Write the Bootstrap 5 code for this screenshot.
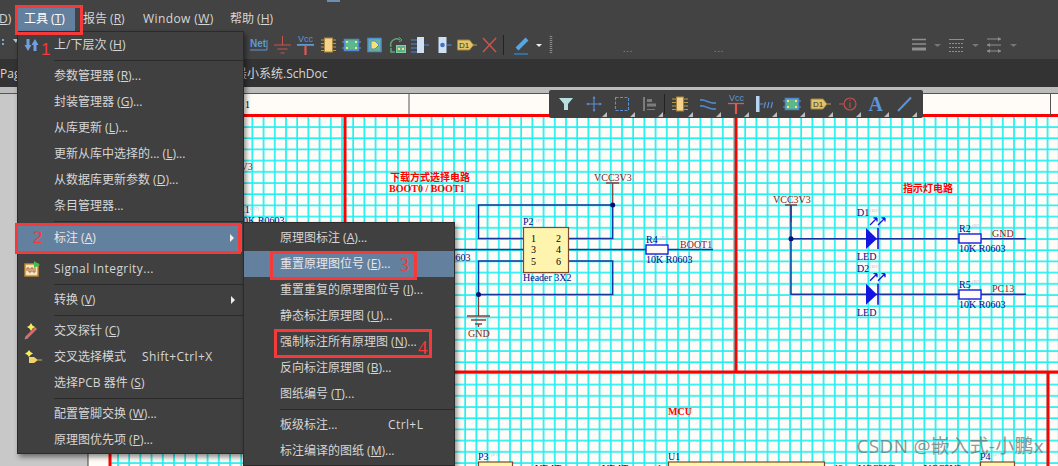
<!DOCTYPE html>
<html lang="zh">

<head>
  <meta charset="UTF-8">
  <title>原理图编辑器</title>
  <link href="https://cdn.jsdelivr.net/npm/bootstrap@5.3.2/dist/css/bootstrap.min.css" rel="stylesheet">
  <style>
    html, body { height: 100%; }

    body {
      background: #c8c8c8;
      color: #d6d6d6;
      font: 12px/1.2 "Open Sans", "Noto Sans CJK SC", sans-serif;
    }

    /* top bars */
    .bar-menu { height: 31px; background: #434343; padding-top: 8px; }
    .bar-tools { height: 28px; background: #434343; }
    .bar-tabs { height: 28px; background: #333; padding-top: 2px; }
    .bar-edge { height: 7px; background: #bcbcbc; border-bottom: 1px solid #555; }

    .top-link { height: 23px; display: flex; align-items: center; color: #d6d6d6; text-decoration: none; }
    .top-clip { width: 18px; margin-left: -1px; }
    .top-active { width: 58px; padding-left: 7px; background: #64809f; color: #fff; margin-right: 8px; }
    .top-report { width: 60px; }
    .top-window { width: 87px; letter-spacing: .4px; }
    .wide-latin { letter-spacing: .4px; }

    .tool-left { width: 248px; }
    .tool-btn { width: 23px; height: 28px; display: flex; align-items: center; justify-content: center; }
    .tool-sep { width: 1px; height: 20px; background: #222; margin: 0 6px 0 2px; }
    .tool-gap1 { width: 70px; }
    .tool-gap2 { width: 81px; }
    .tool-gap3 { width: 186px; }
    .tool-dots { color: #999; letter-spacing: 1px; font-size: 9px; line-height: 1; margin-top: 6px; }
    .tool-right { width: 24px; }
    .tool-caret { width: 14px; }
    .tab-first { width: 235px; overflow: hidden; }

    /* schematic */
    .sheet-area { min-height: 0; }
    .sheet-area svg { display: block; }
    .sch { font-family: "Liberation Serif", serif; font-size: 10px; }
    .sch-blue { fill: #000a8c; }
    .sch-red { fill: #8a1c1c; }
    .sch-mark { fill: #f00; font-weight: 700; }
    .sch-cjk { font-family: "Noto Sans CJK SC", sans-serif; }
    .sch-tiny { font-size: 5px; fill: #bdbdd6; }
    .wire { fill: none; stroke: #16359f; stroke-width: 1.5; }
    .wire-red { fill: none; stroke: #8a4040; stroke-width: 1.3; }
    .frame { fill: none; stroke: #f00; stroke-width: 3; }
    .part { fill: #fff4ad; stroke: #7a4a2a; stroke-width: 1.2; }
    .res { fill: #fffcf7; stroke: #1a1ae0; stroke-width: 1.4; }

    /* floating toolbar */
    .float-bar {
      top: -4px;
      left: 549px;
      width: 374px;
      height: 28px;
      padding-left: 3px;
      background: #404040;
      border-radius: 2px;
    }
    .float-btn { width: 28px; height: 28px; position: relative; display: flex; align-items: center; justify-content: center; }
    .float-btn::after {
      content: "";
      position: absolute;
      right: 1px;
      bottom: 1px;
      border-left: 5px solid transparent;
      border-bottom: 5px solid #bdbdbd;
    }
    .float-sep { width: 1px; height: 20px; background: #222; margin-top: 4px; margin-right: 1px; }
    .float-plain::after { display: none; }

    /* menus */
    .dropdown-menu.tool-menu {
      --bs-dropdown-bg: #404040;
      --bs-dropdown-border-color: #2b2b2b;
      --bs-dropdown-border-radius: 0;
      --bs-dropdown-padding-y: 0;
      --bs-dropdown-divider-bg: #2a2a2a;
      font-size: 12px;
      min-width: 0;
      box-shadow: 2px 3px 5px rgba(0, 0, 0, .45);
    }
    .tool-menu .dropdown-item {
      display: flex;
      align-items: center;
      height: 26px;
      padding: 0 0 0 36px;
      color: #d6d6d6;
      position: relative;
    }
    .tool-menu .dropdown-item.active { background: #64809f; color: #e8e8e8; }
    .tool-menu .dropdown-divider { margin: 2px 0 2px 36px; }
    .menu-main { top: 31px; left: 17px; width: 227px; height: 423px; }
    .menu-sub { top: 222px; left: 243px; width: 212px; height: 244px; }
    .menu-main .tall-item { height: 28px; margin-bottom: 4px; width: 224px; }
    .menu-sub .top-item { margin-top: 2px; }
    .item-icon { position: absolute; left: 6px; top: 50%; transform: translateY(-50%); }
    .item-arrow {
      position: absolute;
      right: 8px;
      top: 50%;
      margin-top: -4px;
      border-left: 4px solid #eee;
      border-top: 4px solid transparent;
      border-bottom: 4px solid transparent;
    }
    .label-main { width: 88px; }
    .label-sub { width: 108px; }

    /* red notes drawn over the picture */
    .over-menu { z-index: 1100; }
    .note-box { border: 3px solid #f63a3a; }
    .note-top { left: 15px; top: 5px; width: 68px; height: 30px; }
    .note-two { left: 15px; top: 223px; width: 226px; height: 31px; }
    .note-three { left: 270px; top: 251px; width: 147px; height: 29px; }
    .note-four { left: 274px; top: 329px; width: 158px; height: 29px; }
    .note-num { color: #f63a3a; font: 17px/1 "Liberation Sans", sans-serif; }
    .num-one { left: 41px; top: 41px; }
    .num-two { left: 33px; top: 229px; }
    .num-three { left: 400px; top: 256px; font-family: "Liberation Serif", serif; font-size: 18px; }
    .num-four { left: 418px; top: 338px; font-family: "Liberation Serif", serif; font-size: 19px; }

    .water-mark {
      right: 14px;
      top: 436px;
      color: rgba(110, 110, 110, .72);
      font: 19px/1.1 "Open Sans", "Noto Sans CJK SC", sans-serif;
      letter-spacing: .3px;
      white-space: nowrap;
    }
    .blip { left: 327px; top: 0; width: 13px; height: 2px; background: #6d8fb5; }
  </style>
</head>

<body class="d-flex flex-column vh-100 overflow-hidden position-relative">
  <div class="bar-menu d-flex flex-shrink-0 overflow-hidden">
    <a class="top-link top-clip"><u>D</u>)</a>
    <a class="top-link top-active">工具 (<u>T</u>)</a>
    <a class="top-link top-report">报告 (<u>R</u>)</a>
    <a class="top-link top-window">Window (<u>W</u>)</a>
    <a class="top-link">帮助 (<u>H</u>)</a>
  </div>

  <div class="bar-tools d-flex align-items-center flex-shrink-0">
    <div class="tool-left">
      <svg width="20" height="28" viewBox="0 0 20 28">
        <path d="M2 8h2v2H2zM2 12h2v2H2z" fill="#7fa5d8" />
        <path d="M13 8h5l-2 4z" fill="#a9d3dc" />
      </svg>
    </div>
    <div class="tool-btn"><svg width="23" height="20" viewBox="0 0 23 20">
        <text x="2" y="12" font-family="Liberation Sans" font-weight="700" font-size="10" fill="#5c9ad8">Net</text>
        <path d="M2 15h17M19 5v10" stroke="#5c9ad8" fill="none" /></svg></div>
    <div class="tool-btn"><svg width="23" height="20" viewBox="0 0 23 20">
        <path d="M11.5 1v9M3 10h17M6.500 14h10M9.500 18h4" stroke="#c9554d" fill="none" /></svg></div>
    <div class="tool-btn"><svg width="23" height="20" viewBox="0 0 23 20">
        <text x="4" y="7" font-family="Liberation Sans" font-size="9" fill="#5c9ad8">Vcc</text>
        <path d="M3 9.500h17" stroke="#5c9ad8" /><path d="M3 10.500h17" stroke="#d9584f" />
        <path d="M11.500 10v10" stroke="#e0584f" stroke-width="2.200" /></svg></div>
    <div class="tool-btn"><svg width="23" height="20" viewBox="0 0 23 20">
        <path d="M4 5h3M4 8.500h3M4 12h3M4 15.500h3M16 5h3M16 8.500h3M16 12h3M16 15.500h3" stroke="#b49a50" />
        <rect x="7.500" y="3" width="8" height="14" fill="#f4d38a" stroke="#a8843e" /></svg></div>
    <div class="tool-btn"><svg width="23" height="20" viewBox="0 0 23 20">
        <rect x="4.500" y="4.500" width="14" height="11" fill="#5cb88a" stroke="#4f88d0" stroke-width="1.500" />
        <path d="M2 7h4M2 13h4M17 7h4M17 13h4" stroke="#5c9ad8" />
        <path d="M6 6h2v2H6zM15 6h2v2h-2zM6 12h2v2H6zM15 12h2v2h-2z" fill="#f2e27a" /></svg></div>
    <div class="tool-btn"><svg width="23" height="20" viewBox="0 0 23 20">
        <rect x="5" y="3.500" width="13" height="13" fill="#6fb58e" stroke="#4d8fd0" stroke-width="1.500" />
        <path d="M8 6h4l4 4-4 4H8z" fill="#f6e27a" stroke="#4d8fd0" /></svg></div>
    <div class="tool-btn"><svg width="23" height="20" viewBox="0 0 23 20">
        <path d="M5 12a6 6 0 0 1 9-7" stroke="#5fa878" stroke-width="1.500" fill="none" />
        <path d="M13 2l3 3-3 2" stroke="#5fa878" fill="none" />
        <path d="M5 13v4h4" stroke="#5fa878" stroke-width="1.500" fill="none" />
        <rect x="10.500" y="10.500" width="9" height="7" fill="#5fae8c" stroke="#88cbaa" />
        <path d="M12 13h2v2h-2zM16 13h2v2h-2z" fill="#f2e27a" /></svg></div>
    <div class="tool-btn"><svg width="23" height="20" viewBox="0 0 23 20">
        <path d="M2 5h6M2 9h6M2 13h6M2 17h6M15 10h5" stroke="#4f88d8" stroke-width="1.200" />
        <rect x="8" y="2" width="7" height="16" fill="#cfe0f5" /></svg></div>
    <div class="tool-btn"><svg width="23" height="20" viewBox="0 0 23 20">
        <rect x="6.500" y="2" width="8" height="16" fill="#cfe0f5" />
        <path d="M14.500 10h5" stroke="#4f88d8" stroke-width="1.200" />
        <circle cx="10.500" cy="10" r="2.300" fill="#3f6fc8" /></svg></div>
    <div class="tool-btn"><svg width="23" height="20" viewBox="0 0 23 20">
        <path d="M2.500 5h12l4 5-4 5h-12z" fill="#e3c468" stroke="#a0853c" />
        <path d="M18 10h4" stroke="#b89c50" />
        <text x="4" y="13" font-family="Liberation Sans" font-size="8" fill="#333">D1</text></svg></div>
    <div class="tool-btn"><svg width="23" height="20" viewBox="0 0 23 20">
        <path d="M5 3l13 14M18 3L5 17" stroke="#c9554d" stroke-width="1.500" /></svg></div>
    <div class="tool-sep"></div>
    <div class="tool-btn"><svg width="23" height="20" viewBox="0 0 23 20">
        <path d="M7 14L17 4" stroke="#55a8e8" stroke-width="4" />
        <path d="M4 19h14" stroke="#2a7fc4" stroke-width="1.500" /></svg></div>
    <svg width="16" height="28" viewBox="0 0 16 28"><path d="M3 13h6l-3 3z" fill="#eee" /></svg>
    <svg width="4" height="28" viewBox="0 0 4 28"><path d="M2 5v18" stroke="#8c8c8c" stroke-width="2.500" stroke-dasharray="1 1" /></svg>
    <div class="tool-gap1"></div>
    <div class="tool-dots">...</div>
    <div class="tool-gap2"></div>
    <div class="tool-dots">...</div>
    <div class="tool-gap3"></div>
    <svg class="tool-right" height="20" viewBox="0 0 24 20">
      <path d="M2 4.500h14M2 9h14" stroke="#8f8f8f" stroke-width="1.400" /><path d="M2 14h14" stroke="#8f8f8f" stroke-width="3" />
    </svg>
    <svg class="tool-caret" height="28" viewBox="0 0 14 28"><path d="M0 13h7l-3.500 3z" fill="#777" /></svg>
    <svg class="tool-right" height="20" viewBox="0 0 24 20">
      <path d="M1 4.500h15" stroke="#8f8f8f" /><path d="M1 8.500h15M1 12.500h15M1 16.500h15" stroke="#8f8f8f" stroke-dasharray="2 1" />
    </svg>
    <svg class="tool-caret" height="28" viewBox="0 0 14 28"><path d="M0 13h7l-3.500 3z" fill="#777" /></svg>
    <svg class="tool-right" height="20" viewBox="0 0 24 20">
      <path d="M1 4h14M1 10h14M1 16h14" stroke="#8f8f8f" stroke-width="1.200" />
      <path d="M12 2l3 2-3 2zM4 8l-3 2 3 2zM4 14l-3 2 3 2zM12 14l3 2-3 2z" fill="#8f8f8f" />
    </svg>
    <svg class="tool-caret" height="28" viewBox="0 0 14 28"><path d="M0 13h7l-3.500 3z" fill="#777" /></svg>
  </div>

  <div class="bar-tabs d-flex align-items-center flex-shrink-0">
    <div class="tab-first">Pag</div>
    <div class="text-nowrap">最小系统.SchDoc</div>
  </div>
  <div class="bar-edge flex-shrink-0"></div>

  <div class="sheet-area flex-grow-1 position-relative">
    <svg width="1058" height="372" viewBox="0 94 1058 372">
      <defs>
        <pattern id="grid" x="5" y="2.800" width="11.200" height="11.200" patternUnits="userSpaceOnUse">
          <path d="M1 0V11.200M0 1H11.200" stroke="#1ff0f2" stroke-width="1.700" fill="none" />
        </pattern>
      </defs>
      <rect x="88" y="94" width="970" height="372" fill="#fffcf7" />
      <path d="M88 94V466" stroke="#444" />
      <rect x="110" y="116" width="948" height="350" fill="url(#grid)" />

      <!-- sheet frame -->
      <path class="frame" d="M110 115.500H1058M110 115.500V466M345 116V372M736 116V372M110 372H1058M1048 372V466" />
      <path d="M409 94v21M1050.500 94v21" stroke="#555" />
      <text class="sch" x="245" y="108">1</text>

      <!-- left block, mostly under the menus -->
      <text class="sch sch-red" x="215" y="170">VCC3V3</text>
      <text class="sch sch-blue" x="238" y="213">R1</text>
      <text class="sch sch-tiny" x="250" y="210">(R?)</text>
      <text class="sch sch-blue" x="238" y="224">10K R0603</text>
      <text class="sch sch-blue" x="424" y="261">10K R0603</text>

      <!-- boot select -->
      <text class="sch sch-mark sch-cjk" x="390" y="181">下载方式选择电路</text>
      <text class="sch sch-mark" x="389" y="192">BOOT0 / BOOT1</text>
      <path class="wire-red" d="M612.700 205V183M606 183h13M478.500 295V316M467 316h23M471 320h15M475 324h7M478.500 324v3" />
      <path class="wire" d="M523 238.500H478.500V205H612.700V238.500H568M440 249.500H523M568 249.500H646M668 249.500H713M523 261H478.500V294.500H612.700V261H568" />
      <circle cx="612.700" cy="205" r="2.500" fill="#00107a" />
      <circle cx="478.500" cy="294.500" r="2.500" fill="#00107a" />
      <text class="sch sch-red" x="594" y="181">VCC3V3</text>
      <text class="sch sch-red" x="468" y="337">GND</text>
      <rect class="part" x="523.500" y="227.500" width="45" height="45" />
      <text class="sch sch-blue" x="523" y="225">P2</text>
      <text class="sch sch-tiny" x="536" y="222">(P?)</text>
      <text class="sch" x="531" y="242">1</text><text class="sch" x="556" y="242">2</text>
      <text class="sch" x="531" y="253">3</text><text class="sch" x="556" y="253">4</text>
      <text class="sch" x="531" y="265">5</text><text class="sch" x="556" y="265">6</text>
      <text class="sch sch-blue" x="523" y="281">Header 3X2</text>
      <rect class="res" x="646" y="245" width="22" height="9" />
      <text class="sch sch-blue" x="646" y="243">R4</text>
      <text class="sch sch-tiny" x="660" y="239">(R?)</text>
      <text class="sch sch-red" x="680" y="248">BOOT1</text>
      <text class="sch sch-blue" x="646" y="263">10K R0603</text>

      <!-- LED block -->
      <text class="sch sch-mark sch-cjk" x="903" y="192">指示灯电路</text>
      <path class="wire-red" d="M791 205V222M785 205h12" />
      <path class="wire" d="M791 205V294.300H1026M791 238.700H1026" />
      <circle cx="791" cy="238.700" r="2.500" fill="#00107a" />
      <text class="sch sch-red" x="773" y="203">VCC3V3</text>
      <g id="led-one">
        <path d="M866 228L877 238.700L866 249z" fill="#1414e0" />
        <path d="M878 228v21" stroke="#1414e0" stroke-width="1.600" />
        <path d="M870 225l7-7M877 218h-3.500M877 218v3.500M878 225l7-7M885 218h-3.500M885 218v3.500" stroke="#1414e0" stroke-width="1.300" fill="none" />
      </g>
      <use href="#led-one" y="55.700" />
      <text class="sch sch-blue" x="857" y="216">D1</text>
      <text class="sch sch-tiny" x="870" y="212">(D?)</text>
      <text class="sch sch-blue" x="857" y="260">LED</text>
      <text class="sch sch-blue" x="857" y="272">D2</text>
      <text class="sch sch-tiny" x="870" y="268">(D?)</text>
      <text class="sch sch-blue" x="857" y="316">LED</text>
      <rect class="res" x="959" y="234" width="22" height="9" />
      <rect class="res" x="959" y="290" width="22" height="9" />
      <text class="sch sch-blue" x="959" y="232">R2</text>
      <text class="sch sch-tiny" x="972" y="227">(R?)</text>
      <text class="sch sch-red" x="992" y="237">GND</text>
      <text class="sch sch-blue" x="959" y="252">10K R0603</text>
      <text class="sch sch-blue" x="959" y="288">R5</text>
      <text class="sch sch-tiny" x="972" y="283">(R?)</text>
      <text class="sch sch-red" x="992" y="292">PC13</text>
      <text class="sch sch-blue" x="959" y="308">10K R0603</text>

      <!-- MCU block -->
      <text class="sch sch-mark" x="668" y="415">MCU</text>
      <text class="sch sch-blue" x="478" y="460">P3</text>
      <text class="sch sch-tiny" x="491" y="456">(P?)</text>
      <text class="sch sch-blue" x="668" y="460">U1</text>
      <text class="sch sch-blue" x="980" y="460">P4</text>
      <text class="sch sch-tiny" x="993" y="456">(P?)</text>
      <rect class="part" x="478.500" y="462" width="34" height="20" />
      <rect class="part" x="668.500" y="462" width="156" height="20" />
      <rect class="part" x="980.500" y="462" width="34" height="20" />
      <text class="sch" x="535" y="472">VBAT</text>
      <text class="sch" x="602" y="472">VBAT</text>
      <text class="sch" x="657" y="472">1</text>
      <text class="sch" x="833" y="472">48</text>
      <text class="sch" x="858" y="472">VCC3V3</text>
      <text class="sch" x="924" y="472">VCC3V3</text>
    </svg>

    <!-- floating toolbar over the sheet -->
    <div class="float-bar position-absolute d-flex">
      <div class="float-btn float-plain"><svg width="22" height="20" viewBox="0 0 22 20">
          <path d="M4 4h14l-5 6v6H9v-6z" fill="#b5e0e2" /></svg></div>
      <div class="float-btn"><svg width="22" height="20" viewBox="0 0 22 20">
          <path d="M11 3v14M4 10h14" stroke="#5c8fd8" stroke-width="1.100" />
          <path d="M11 2l1.500 2.500h-3zM11 18l1.500-2.500h-3zM3 10l2.500-1.500v3zM19 10l-2.500-1.500v3z" fill="#5c8fd8" /></svg></div>
      <div class="float-btn"><svg width="22" height="20" viewBox="0 0 22 20">
          <rect x="4.500" y="3.500" width="13" height="13" fill="none" stroke="#5c8fd8" stroke-width="1.100" stroke-dasharray="3 1.500" /></svg></div>
      <div class="float-btn"><svg width="22" height="20" viewBox="0 0 22 20">
          <path d="M5 3v14" stroke="#7c7c7c" stroke-width="2" /><path d="M8 5h5v3H8zM8 9.500h9v3H8z" fill="#7c7c7c" />
          <path d="M8 15.500h8" stroke="#7c7c7c" /></svg></div>
      <div class="float-sep"></div>
      <div class="float-btn"><svg width="22" height="20" viewBox="0 0 22 20">
          <path d="M3 5h4M3 8.500h4M3 12h4M3 15.500h4M15 5h4M15 8.500h4M15 12h4M15 15.500h4" stroke="#b49a50" />
          <rect x="7.500" y="3" width="7" height="14" fill="#f4d38a" stroke="#a8843e" /></svg></div>
      <div class="float-btn"><svg width="22" height="20" viewBox="0 0 22 20">
          <path d="M3 6c6-1 9 4 16 3M3 12c6-1 9 4 16 3" stroke="#4f8ac8" stroke-width="1.600" fill="none" /></svg></div>
      <div class="float-btn"><svg width="22" height="20" viewBox="0 0 22 20">
          <text x="4" y="7" font-family="Liberation Sans" font-size="9" fill="#5c9ad8">Vcc</text>
          <path d="M3 9.500h16" stroke="#e0584f" stroke-width="1.300" />
          <path d="M11 10v10" stroke="#e0584f" stroke-width="2.200" /></svg></div>
      <div class="float-btn"><svg width="22" height="20" viewBox="0 0 22 20">
          <rect x="3" y="2" width="3.500" height="16" fill="#b8d4f5" />
          <path d="M6.500 10h4M11 14l1.500-6M14.500 14l1.500-6M18 14l1.500-6" stroke="#5c8fd8" stroke-width="1.200" /></svg></div>
      <div class="float-btn"><svg width="22" height="20" viewBox="0 0 22 20">
          <rect x="4.500" y="4.500" width="13" height="11" fill="#5cb88a" stroke="#4f88d0" stroke-width="1.500" />
          <path d="M2 7h4M2 13h4M16 7h4M16 13h4" stroke="#5c9ad8" />
          <path d="M6 6h2v2H6zM14 6h2v2h-2zM6 12h2v2H6zM14 12h2v2h-2z" fill="#f2e27a" /></svg></div>
      <div class="float-btn"><svg width="22" height="20" viewBox="0 0 22 20">
          <path d="M2 5h12l4 5-4 5H2z" fill="#e3c468" stroke="#a0853c" /><path d="M18 10h4" stroke="#b89c50" />
          <text x="4" y="13" font-family="Liberation Sans" font-size="8" fill="#333">D1</text></svg></div>
      <div class="float-btn"><svg width="22" height="20" viewBox="0 0 22 20">
          <circle cx="13" cy="10" r="6" fill="none" stroke="#c8504c" stroke-width="1.100" />
          <path d="M2 10h5M13 8.500V14" stroke="#c8504c" stroke-width="1.100" /><path d="M12.500 5.500h1v1.500h-1z" fill="#c8504c" /></svg></div>
      <div class="float-btn"><svg width="22" height="20" viewBox="0 0 22 20">
          <text x="3.500" y="17" font-family="Liberation Serif" font-weight="700" font-size="20" fill="#5b94d8">A</text></svg></div>
      <div class="float-btn"><svg width="22" height="20" viewBox="0 0 22 20">
          <path d="M5 17L18 3.500" stroke="#5b94d8" stroke-width="2" /></svg></div>
    </div>
  </div>

  <!-- tools menu -->
  <div class="dropdown-menu show tool-menu menu-main position-absolute">
    <a class="dropdown-item">
      <svg class="item-icon" width="16" height="14" viewBox="0 0 16 14">
        <path d="M4 1v7M11 13V6" stroke="#6f9fe0" stroke-width="3" /><path d="M0.500 7h7L4 13zM7.500 7h7L11 1z" fill="#6f9fe0" />
      </svg>
      上/下层次 (<u>H</u>)
    </a>
    <div class="dropdown-divider"></div>
    <a class="dropdown-item">参数管理器 (<u>R</u>)...</a>
    <a class="dropdown-item">封装管理器 (<u>G</u>)...</a>
    <a class="dropdown-item">从库更新 (<u>L</u>)...</a>
    <a class="dropdown-item">更新从库中选择的... (<u>L</u>)...</a>
    <a class="dropdown-item">从数据库更新参数 (<u>D</u>)...</a>
    <a class="dropdown-item">条目管理器...</a>
    <div class="dropdown-divider"></div>
    <a class="dropdown-item active tall-item">标注 (<u>A</u>)<span class="item-arrow"></span></a>
    <a class="dropdown-item">
      <svg class="item-icon" width="16" height="16" viewBox="0 0 16 16">
        <rect x="1" y="3" width="13" height="12" fill="#f3e4c0" stroke="#c8862e" stroke-width="1.400" />
        <path d="M3 10V7h2v4h2V7h2v4h2V7" stroke="#a8622a" fill="none" />
        <path d="M10 0l6 4-6 3z" fill="#3cc04a" />
      </svg>
      <span class="wide-latin">Signal Integrity...</span>
    </a>
    <div class="dropdown-divider"></div>
    <a class="dropdown-item">转换 (<u>V</u>)<span class="item-arrow"></span></a>
    <div class="dropdown-divider"></div>
    <a class="dropdown-item">
      <svg class="item-icon" width="16" height="18" viewBox="0 0 16 18">
        <path d="M2 16L12 6" stroke="#d96a68" stroke-width="3" /><path d="M1 17l2-2" stroke="#999" stroke-width="1.400" />
        <path d="M7 1l1.500 2.500L11 5 8.500 6.500 7 9 5.500 6.500 3 5l2.500-1.500z" fill="#f8ec5a" />
      </svg>
      交叉探针 (<u>C</u>)
    </a>
    <a class="dropdown-item">
      <svg class="item-icon" width="18" height="16" viewBox="0 0 18 16">
        <path d="M5 1l1.500 2L9 4.500 6.500 6 5 8 3.500 6 1 4.500 3.500 3z" fill="#f8ec5a" />
        <path d="M5 8h5l4 3-4 3H5z" fill="#f2d06a" /><path d="M14 11h4" stroke="#d0b050" />
      </svg>
      <span class="label-main">交叉选择模式</span><span class="wide-latin">Shift+Ctrl+X</span>
    </a>
    <a class="dropdown-item">选择PCB 器件 (<u>S</u>)</a>
    <div class="dropdown-divider"></div>
    <a class="dropdown-item">配置管脚交换 (<u>W</u>)...</a>
    <a class="dropdown-item">原理图优先项 (<u>P</u>)...</a>
  </div>

  <!-- annotate submenu -->
  <div class="dropdown-menu show tool-menu menu-sub position-absolute">
    <a class="dropdown-item top-item">原理图标注 (<u>A</u>)...</a>
    <a class="dropdown-item active">重置原理图位号 (<u>E</u>)...</a>
    <a class="dropdown-item">重置重复的原理图位号 (<u>I</u>)...</a>
    <a class="dropdown-item">静态标注原理图 (<u>U</u>)...</a>
    <a class="dropdown-item">强制标注所有原理图 (<u>N</u>)...</a>
    <a class="dropdown-item">反向标注原理图 (<u>B</u>)...</a>
    <a class="dropdown-item">图纸编号 (<u>T</u>)...</a>
    <div class="dropdown-divider"></div>
    <a class="dropdown-item"><span class="label-sub">板级标注...</span><span class="wide-latin">Ctrl+L</span></a>
    <a class="dropdown-item">标注编译的图纸 (<u>M</u>)...</a>
  </div>

  <div class="blip position-absolute"></div>
  <div class="note-box note-top position-absolute over-menu"></div>
  <div class="note-box note-two position-absolute over-menu"></div>
  <div class="note-box note-three position-absolute over-menu"></div>
  <div class="note-box note-four position-absolute over-menu"></div>
  <div class="note-num num-one position-absolute over-menu">1</div>
  <div class="note-num num-two position-absolute over-menu">2</div>
  <div class="note-num num-three position-absolute over-menu">3</div>
  <div class="note-num num-four position-absolute over-menu">4</div>
  <div class="water-mark position-absolute over-menu">CSDN @嵌入式-小鹏x</div>

  <script src="https://cdn.jsdelivr.net/npm/bootstrap@5.3.2/dist/js/bootstrap.bundle.min.js"></script>
</body>

</html>
